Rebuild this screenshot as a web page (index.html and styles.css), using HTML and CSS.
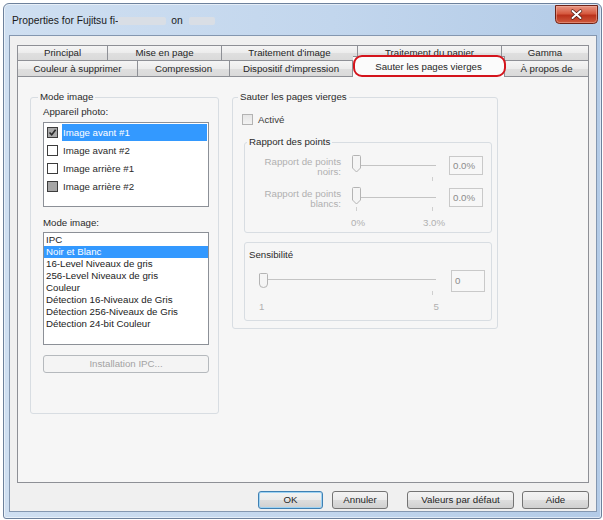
FILE: index.html
```html
<!DOCTYPE html>
<html lang="fr">
<head>
<meta charset="utf-8">
<title>Properties</title>
<link rel="stylesheet" href="styles.css">
</head>
<body>
<div class="window">
  <div class="titlebar">
    <div class="title">Properties for Fujitsu fi-<span class="redact r1"></span> on <span class="redact r2"></span></div>
    <svg class="winclose" width="43" height="19" viewBox="0 0 43 19">
      <defs>
        <linearGradient id="cg" x1="0" y1="0" x2="0" y2="1">
          <stop offset="0" stop-color="#e99a88"/>
          <stop offset="0.45" stop-color="#d65a40"/>
          <stop offset="0.55" stop-color="#bb321c"/>
          <stop offset="1" stop-color="#cf5c3f"/>
        </linearGradient>
      </defs>
      <path d="M0.5 0.5 H42.5 V14.5 Q42.5 18.5 38.5 18.5 H4.5 Q0.5 18.5 0.5 14.5 Z" fill="url(#cg)" stroke="#6e2216"/>
      <path d="M1.5 1.5 H41.5 V14.5 Q41.5 17.5 38.5 17.5 H4.5 Q1.5 17.5 1.5 14.5 Z" fill="none" stroke="#f2b3a4" stroke-opacity="0.5"/>
      <path d="M17.5 6 L25.5 13 M25.5 6 L17.5 13" stroke="#4a1a10" stroke-width="3.4" stroke-linecap="round"/>
      <path d="M17.5 6 L25.5 13 M25.5 6 L17.5 13" stroke="#ffffff" stroke-width="2" stroke-linecap="round"/>
    </svg>
  </div>
  <div class="client">
    <div class="tabs">
      <div class="tabrow back">
        <div class="tab first w-principal">Principal</div>
        <div class="tab w-mise">Mise en page</div>
        <div class="tab w-timg">Traitement d'image</div>
        <div class="tab w-tpap">Traitement du papier</div>
        <div class="tab last">Gamma</div>
      </div>
      <div class="tabrow front">
        <div class="tab first w-coul">Couleur à supprimer</div>
        <div class="tab w-comp">Compression</div>
        <div class="tab w-disp">Dispositif d'impression</div>
        <div class="tab selected w-saut">Sauter les pages vierges</div>
        <div class="tab last">À propos de</div>
      </div>
      <div class="annot"></div>
    </div>
    <div class="panel">
      <fieldset class="grp grp-left">
        <legend>Mode image</legend>
        <div class="inner-left">
          <div class="lbl lbl-app">Appareil photo:</div>
          <div class="checklist">
            <div class="citem"><span class="cb cb-checked"><svg width="9" height="9" viewBox="0 0 9 9"><path d="M1.5 4.5 L3.7 6.8 L7.6 1.8" fill="none" stroke="#2b2b2b" stroke-width="1.6"/></svg></span><span class="ctext sel">Image avant #1</span></div>
            <div class="citem"><span class="cb"></span><span class="ctext">Image avant #2</span></div>
            <div class="citem"><span class="cb"></span><span class="ctext">Image arrière #1</span></div>
            <div class="citem"><span class="cb cb-ind"></span><span class="ctext">Image arrière #2</span></div>
          </div>
          <div class="lbl lbl-mode">Mode image:</div>
          <div class="listbox">
            <div class="litem">IPC</div>
            <div class="litem sel">Noir et Blanc</div>
            <div class="litem">16-Level Niveaux de gris</div>
            <div class="litem">256-Level Niveaux de gris</div>
            <div class="litem">Couleur</div>
            <div class="litem">Détection 16-Niveaux de Gris</div>
            <div class="litem">Détection 256-Niveaux de Gris</div>
            <div class="litem">Détection 24-bit Couleur</div>
          </div>
          <div class="btn-dis">Installation IPC...</div>
        </div>
      </fieldset>
      <fieldset class="grp grp-right">
        <legend>Sauter les pages vierges</legend>
        <div class="inner-right">
          <div class="chkrow"><span class="cb cb-dis"></span><span class="chklbl">Activé</span></div>
          <fieldset class="grp grp-ratio">
            <legend>Rapport des points</legend>
            <div class="srow srow1">
              <div class="slbl">Rapport de points<br>noirs:</div>
              <svg class="slider" width="92" height="22" viewBox="0 0 92 22">
                <line x1="13" y1="11.5" x2="88" y2="11.5" stroke="#c4c4c4" stroke-width="1"/>
                <line x1="84.5" y1="23" x2="84.5" y2="27" stroke="#cfcfcf"/>
                <path d="M4.5 2.5 Q4.5 1.5 5.5 1.5 H11.5 Q12.5 1.5 12.5 2.5 V14 L8.5 18 L4.5 14 Z" fill="#f5f5f5" stroke="#b4b4b4"/>
              </svg>
              <div class="tbox tbox-pct">0.0%</div>
            </div>
            <div class="srow srow2">
              <div class="slbl">Rapport de points<br>blancs:</div>
              <svg class="slider" width="92" height="22" viewBox="0 0 92 22">
                <line x1="13" y1="11.5" x2="88" y2="11.5" stroke="#c4c4c4" stroke-width="1"/>
                <line x1="8.5" y1="21" x2="8.5" y2="25" stroke="#cfcfcf"/>
                <line x1="84.5" y1="21" x2="84.5" y2="25" stroke="#cfcfcf"/>
                <path d="M4.5 2.5 Q4.5 1.5 5.5 1.5 H11.5 Q12.5 1.5 12.5 2.5 V14 L8.5 18 L4.5 14 Z" fill="#f5f5f5" stroke="#b4b4b4"/>
              </svg>
              <div class="tbox tbox-pct">0.0%</div>
            </div>
            <div class="scale scale-ratio"><span class="s0">0%</span><span class="s1">3.0%</span></div>
          </fieldset>
          <fieldset class="grp grp-sens">
            <div class="sens-lbl">Sensibilité</div>
            <div class="srow srow3">
              <svg class="slider-long" width="186" height="22" viewBox="0 0 186 22">
                <line x1="12" y1="9.5" x2="181" y2="9.5" stroke="#c4c4c4" stroke-width="1"/>
                <line x1="177.5" y1="21" x2="177.5" y2="25" stroke="#cfcfcf"/>
                <path d="M4.5 4 Q4.5 3.5 5.5 3.5 H11.5 Q12.5 3.5 12.5 4.5 V14 Q12.5 17.5 8.5 17.5 Q4.5 17.5 4.5 14 Z" fill="#f5f5f5" stroke="#b4b4b4"/>
              </svg>
              <div class="tbox tbox-sens">0</div>
            </div>
            <div class="scale scale-sens"><span class="s0">1</span><span class="s1">5</span></div>
          </fieldset>
        </div>
      </fieldset>
    </div>
    <div class="buttons">
      <button class="btn btn-ok">OK</button>
      <button class="btn btn-cancel">Annuler</button>
      <button class="btn btn-def">Valeurs par défaut</button>
      <button class="btn btn-help">Aide</button>
    </div>
  </div>
</div>
</body>
</html>
```

FILE: styles.css
```css
* { box-sizing: border-box; }

body {
  margin: 0;
  background: #ffffff;
  font-family: "Liberation Sans", Arial, sans-serif;
  font-size: 9.7px;
  color: #262626;
}

.window {
  margin: 3px 0 0 3px;
  width: 599px;
  height: 516px;
  border: 1px solid #6d819c;
  border-radius: 6px 6px 3px 3px;
  background: linear-gradient(to right, #cfdff1, #c2d6ed 55%, #b3cbe7);
  box-shadow: inset 0 0 0 1px rgba(255,255,255,0.55);
  display: flex;
  flex-direction: column;
}

.titlebar {
  height: 31px;
  display: flex;
  justify-content: space-between;
  align-items: flex-start;
}

.title {
  margin: 11px 0 0 8px;
  font-size: 10.3px;
  line-height: 12px;
  color: #1a1a1a;
  display: flex;
  align-items: center;
  white-space: pre;
}

.redact {
  display: inline-block;
  height: 8px;
  background: #d9dee5;
  border-radius: 2px;
  filter: blur(0.6px);
}
.r1 { width: 48px; margin-right: 2px; }
.r2 { width: 26px; margin-left: 3px; }

.winclose {
  display: block;
  flex: none;
  margin: 1px 3px 0 0;
}

.client {
  margin: 0 4px 0 5px;
  height: 477px;
  border: 1px solid #8497b0;
  background: #f0f0f0;
  padding: 9px 7px 0 7px;
}

/* tabs */
.tabs {
  position: relative;
}
.tabrow { display: flex; }
.tab {
  border-top: 1px solid #8e9096;
  border-right: 1px solid #8e9096;
  background: linear-gradient(#f5f5f5 0%, #ececec 50%, #dfdfdf 52%, #dadada 100%);
  text-align: center;
  white-space: nowrap;
  color: #262626;
}
.tab.first { border-left: 1px solid #8e9096; }
.tab.last { flex: 1; }
.back .tab { height: 15px; line-height: 14px; }
.front .tab { height: 16px; line-height: 15px; }
.tab.selected {
  position: relative;
  z-index: 2;
  height: 21px;
  margin-top: -4px;
  margin-bottom: -1px;
  line-height: 19px;
  background: #fbfbfb;
}

.w-principal { width: 91px; }
.w-mise { width: 114px; }
.w-timg { width: 136px; }
.w-tpap { width: 144px; }
.w-coul { width: 121px; }
.w-comp { width: 92px; }
.w-disp { width: 123px; }
.w-saut { width: 152px; }

.annot {
  position: absolute;
  left: 336px;
  top: 10px;
  width: 153px;
  height: 22px;
  border: 2.5px solid #d4141c;
  border-radius: 9px;
  z-index: 3;
}

/* panel */
.panel {
  height: 407px;
  border: 1px solid #8e9096;
  background: #f6f6f6;
  padding: 14px 0 0 12px;
  display: flex;
  align-items: flex-start;
  gap: 13px;
}

.grp {
  margin: 0;
  padding: 0;
  min-width: 0;
  border: 1px solid #d8dde2;
  border-radius: 3px;
}
.grp legend {
  padding: 0 2px;
  line-height: 12px;
  font-size: 9.7px;
  color: #2a2a2a;
}

.grp-left {
  width: 189px;
  height: 323px;
}
.grp-left legend { margin-left: 7px; }
.inner-left { padding: 0 9px 0 12px; }

.lbl { height: 12px; line-height: 12px; color: #2a2a2a; }
.lbl-app { margin-top: 3px; }
.lbl-mode { margin-top: 10px; }

.checklist {
  margin-top: 4px;
  height: 85px;
  border: 1px solid #8c9097;
  background: #ffffff;
}
.citem {
  height: 18px;
  display: flex;
  align-items: center;
}
.cb {
  width: 11px;
  height: 11px;
  margin-left: 3px;
  border: 1px solid #3c3c3c;
  background: #ffffff;
  display: flex;
  align-items: center;
  justify-content: center;
  flex: none;
}
.cb-checked { background: #a9a9a9; }
.cb-ind { background: #a6a6a6; }
.ctext {
  margin-left: 4px;
  margin-right: 1px;
  flex: 1;
  height: 17px;
  line-height: 17px;
  padding-left: 1px;
  color: #2a2a2a;
}
.ctext.sel { background: #3399ff; color: #ffffff; }

.listbox {
  margin-top: 3px;
  height: 113px;
  border: 1px solid #8c9097;
  background: #ffffff;
  padding-top: 1px;
}
.litem {
  height: 12px;
  line-height: 12px;
  padding-left: 2px;
  color: #222;
  white-space: nowrap;
}
.litem.sel { background: #3399ff; color: #ffffff; }

.btn-dis {
  margin-top: 10px;
  height: 18px;
  border: 1px solid #b5b9bd;
  border-radius: 3px;
  background: #f4f4f4;
  color: #a3a3a3;
  text-align: center;
  line-height: 16px;
}

.grp-right {
  width: 266px;
  padding-bottom: 7px;
}
.grp-right legend { margin-left: 5px; }
.inner-right { padding: 0; }

.chkrow {
  margin-top: 10px;
  height: 12px;
  display: flex;
  align-items: center;
}
.cb-dis {
  margin-left: 9px;
  border-color: #b3b3b3;
  background: linear-gradient(#e6e6e6, #f3f3f3);
}
.chklbl { margin-left: 5px; color: #3a3a3a; }

.grp-ratio {
  margin: 11px 5px 0 11px;
  padding-bottom: 4px;
}
.grp-ratio legend { margin-left: 2px; }

.srow {
  display: flex;
  align-items: flex-start;
  height: 22px;
}
.srow1 { margin-top: 6px; }
.srow2 { margin-top: 10px; }
.slbl {
  width: 96px;
  text-align: right;
  line-height: 10px;
  padding-top: 3px;
  color: #b0b0b0;
}
.slider { margin-left: 7px; overflow: visible; flex: none; }
.tbox {
  border: 1px solid #c9c9c9;
  background: #f7f7f7;
  color: #8c8c8c;
  padding-left: 3px;
  flex: none;
}
.tbox-pct {
  margin-left: 9px;
  margin-top: 2px;
  width: 34px;
  height: 19px;
  line-height: 17px;
}

.scale {
  display: flex;
  height: 10px;
  line-height: 10px;
  color: #b0b0b0;
}
.scale-ratio { margin-top: 10px; }
.scale-ratio .s0 { margin-left: 106px; }
.scale-ratio .s1 { margin-left: 58px; }

.grp-sens {
  margin: 9px 5px 0 11px;
  padding-bottom: 8px;
}
.sens-lbl {
  margin: 6px 0 0 4px;
  height: 12px;
  line-height: 12px;
  color: #2a2a2a;
}
.srow3 { margin-top: 9px; }
.slider-long { margin-left: 10px; overflow: visible; flex: none; }
.tbox-sens {
  margin-left: 10px;
  width: 34px;
  height: 22px;
  line-height: 20px;
}
.scale-sens { margin-top: 10px; }
.scale-sens .s0 { margin-left: 14px; }
.scale-sens .s1 { margin-left: 169px; }

/* buttons */
.buttons {
  display: flex;
  justify-content: flex-end;
  margin-top: 8px;
}
.btn {
  height: 18px;
  margin: 0;
  padding: 0;
  border: 1px solid #747474;
  border-radius: 3px;
  background: linear-gradient(#f3f3f3 0%, #ebebeb 50%, #dddddd 52%, #d0d0d0 100%);
  font-family: "Liberation Sans", Arial, sans-serif;
  font-size: 9.7px;
  line-height: 16px;
  color: #262626;
  text-align: center;
}
.btn-ok {
  width: 65px;
  border-color: #3f80b3;
  box-shadow: inset 0 0 0 1px #9fd3f3;
}
.btn-cancel { width: 56px; margin-left: 9px; }
.btn-def { width: 107px; margin-left: 19px; }
.btn-help { width: 67px; margin-left: 8px; }
```
